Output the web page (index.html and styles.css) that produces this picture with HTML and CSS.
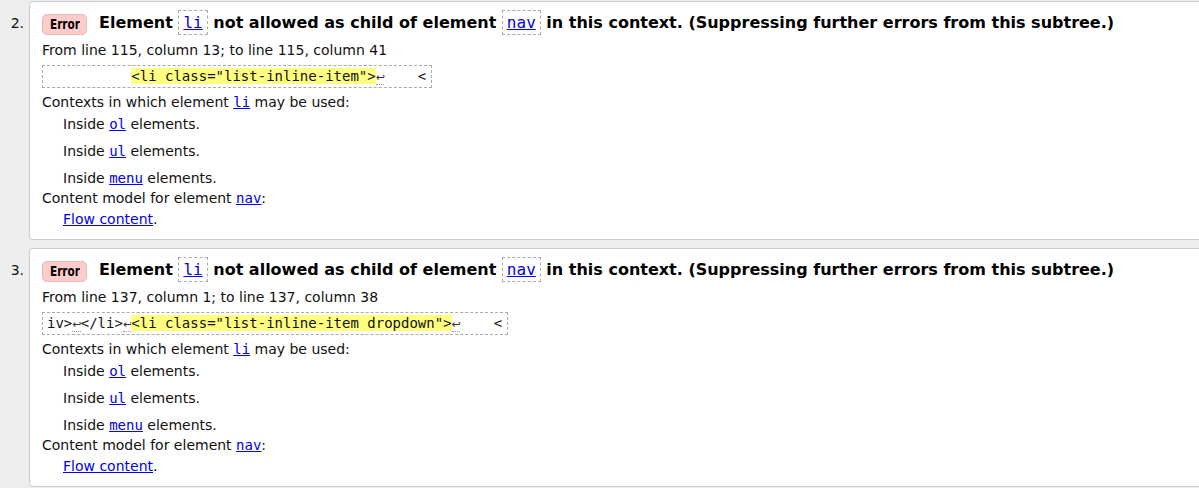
FILE: index.html
```html
<!DOCTYPE html>
<html lang="en">
<head>
<meta charset="utf-8">
<title>Validation results</title>
<link rel="stylesheet" href="styles.css">
</head>
<body>
<ol class="results">
  <li class="result">
    <span class="num">2.</span>
    <div class="card">
      <p class="msg"><strong class="badge"><span class="badge-text">Error</span></strong><span class="text">Element <code class="ref"><a href="#">li</a></code> not allowed as child of element <code class="ref"><a href="#">nav</a></code> in this context. (Suppressing further errors from this subtree.)</span></p>
      <p class="location">From line 115, column 13; to line 115, column 41</p>
      <p class="extract"><code>          <b>&lt;li class="list-inline-item"&gt;</b><span class="lf">↩</span>    &lt;</code></p>
      <dl class="details">
        <dt>Contexts in which element <a href="#"><code>li</code></a> may be used:</dt>
        <dd class="ctx">Inside <a href="#"><code>ol</code></a> elements.</dd>
        <dd class="ctx">Inside <a href="#"><code>ul</code></a> elements.</dd>
        <dd class="ctx">Inside <a href="#"><code>menu</code></a> elements.</dd>
        <dt>Content model for element <a href="#"><code>nav</code></a>:</dt>
        <dd class="model"><a href="#">Flow content</a>.</dd>
      </dl>
    </div>
  </li>
  <li class="result">
    <span class="num">3.</span>
    <div class="card">
      <p class="msg"><strong class="badge"><span class="badge-text">Error</span></strong><span class="text">Element <code class="ref"><a href="#">li</a></code> not allowed as child of element <code class="ref"><a href="#">nav</a></code> in this context. (Suppressing further errors from this subtree.)</span></p>
      <p class="location">From line 137, column 1; to line 137, column 38</p>
      <p class="extract"><code>iv&gt;<span class="lf">↩</span>&lt;/li&gt;<span class="lf">↩</span><b>&lt;li class="list-inline-item dropdown"&gt;</b><span class="lf">↩</span>    &lt;</code></p>
      <dl class="details">
        <dt>Contexts in which element <a href="#"><code>li</code></a> may be used:</dt>
        <dd class="ctx">Inside <a href="#"><code>ol</code></a> elements.</dd>
        <dd class="ctx">Inside <a href="#"><code>ul</code></a> elements.</dd>
        <dd class="ctx">Inside <a href="#"><code>menu</code></a> elements.</dd>
        <dt>Content model for element <a href="#"><code>nav</code></a>:</dt>
        <dd class="model"><a href="#">Flow content</a>.</dd>
      </dl>
    </div>
  </li>
</ol>
</body>
</html>
```
FILE: styles.css
```css
html {
  overflow: hidden;
  background: #eeeeee;
}

body {
  margin: 0;
  font-family: "DejaVu Sans", sans-serif;
  font-size: 14px;
  color: #111;
  background: #eeeeee;
}

a {
  color: #0000ee;
  text-decoration: underline;
}

code {
  font-family: "DejaVu Sans Mono", monospace;
  font-size: 14px;
}

.results {
  list-style: none;
  margin: 0;
  padding: 1px 0 0 0;
  width: 1260px;
}

.result {
  display: flex;
  align-items: baseline;
  margin-bottom: 8px;
}

.num {
  flex: none;
  width: 24px;
  margin-right: 5px;
  text-align: right;
}

.card {
  flex: 1;
  background: #fff;
  border: 1px solid #cccccc;
  border-radius: 4px;
  padding: 0 12px 10px;
}

.msg {
  margin: 9px 0 0;
  height: 24px;
  font-size: 16px;
  font-weight: bold;
  line-height: 24px;
  color: #000;
}

.badge {
  display: inline-block;
  box-sizing: border-box;
  width: 45px;
  text-align: center;
  white-space: nowrap;
  font-size: 14px;
  line-height: 19px;
  border: 1px solid #e8b8b8;
  border-radius: 5px;
  background: #ffcccc;
  margin-right: 12px;
  vertical-align: -1px;
}

.badge-text {
  display: inline-block;
  transform: scaleX(0.75);
  transform-origin: center;
  margin: 0 -6px;
}

.ref {
  font-size: 16px;
  font-weight: normal;
  line-height: 18px;
  padding: 2px 4px;
  border: 1px dashed #aaaaaa;
}

.location {
  margin: 5px 0 0;
  line-height: 20px;
}

.extract {
  display: flex;
  margin: 5px 0 0;
}

.extract code {
  white-space: pre;
  line-height: 21px;
  padding: 0 5px 0 4px;
  border: 1px dashed #aaaaaa;
}

.extract b {
  font-weight: normal;
  background: #ffff80;
}

.lf {
  display: inline-block;
  width: 8.43px;
  font-family: "DejaVu Sans", sans-serif;
  font-size: 11px;
  line-height: 12px;
  color: #333;
  border-bottom: 1px dotted #999;
}

.details {
  margin: 4px 0 0;
  line-height: 20px;
}

.details dt {
  margin: 0;
}

.details dd {
  margin: 0 0 0 21px;
}

.details dd.ctx {
  margin-top: 7px;
}

.details dt + dd.ctx {
  margin-top: 2px;
}

.details dd.model {
  margin-top: 1px;
}
```
